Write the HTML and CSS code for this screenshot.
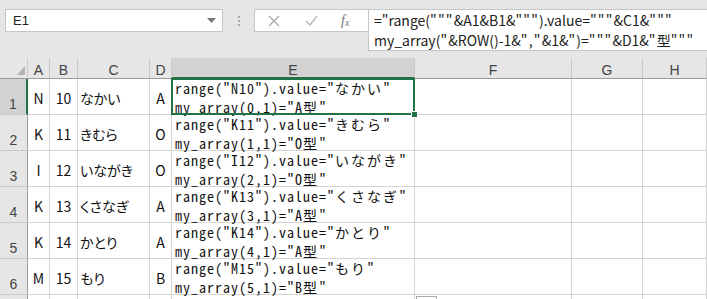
FILE: index.html
```html
<!DOCTYPE html>
<html lang="ja">
<head>
    <meta charset="UTF-8">
    <title>Excel</title>
    <link rel="stylesheet" href="styles.css">
</head>
<body>
    <div class="excel">
        <div class="toolbar">
            <div class="namebox">
                <span>E1</span>
                <svg width="9" height="5" viewBox="0 0 9 5"><path d="M0 0h9L4.5 5z" fill="#7a7a7a"/></svg>
            </div>
            <div class="grip"><i></i><i></i><i></i></div>
            <div class="fx-buttons">
                <svg width="12" height="12" viewBox="0 0 12 12"><path d="M1 1l10 10M11 1L1 11" stroke="#a8a8a8" stroke-width="1.3" fill="none"/></svg>
                <svg width="13" height="11" viewBox="0 0 13 11"><path d="M1 6l4 4L12 1" stroke="#bdbdbd" stroke-width="1.6" fill="none"/></svg>
                <span class="fx">f<sub>x</sub></span>
            </div>
            <div class="formula">
                ="range(<span class="q">"""</span>&amp;A1&amp;B1&amp;<span class="q">"""</span>).value=<span class="q">"""</span>&amp;C1&amp;<span class="q">"""</span><br>
                my_array(<span class="q">"</span>&amp;ROW()-1&amp;<span class="q">","</span>&amp;1&amp;<span class="q">"</span>)=<span class="q">"""</span>&amp;D1&amp;<span class="q">"</span>型<span class="q">"""</span>
            </div>
        </div>

        <div class="sheet">
            <div class="hd corner"><svg width="8" height="9" viewBox="0 0 8 9"><path d="M8 0v9H0z" fill="#b4b4b4"/></svg></div>
            <div class="hd col">A</div>
            <div class="hd col">B</div>
            <div class="hd col">C</div>
            <div class="hd col">D</div>
            <div class="hd col active-col">E</div>
            <div class="hd col">F</div>
            <div class="hd col">G</div>
            <div class="hd col">H</div>

            <div class="hd row active-row">1</div>
            <div class="c mid">N</div><div class="c mid">10</div><div class="c left">なかい</div><div class="c mid">A</div>
            <div class="c code selected">range("N10").value="<span class="jp">なかい</span>"<br>my_array(0,1)="A<span class="jp">型</span>"<span class="handle"></span></div>
            <div class="c"></div><div class="c"></div><div class="c"></div>

            <div class="hd row">2</div>
            <div class="c mid">K</div><div class="c mid">11</div><div class="c left">きむら</div><div class="c mid">O</div>
            <div class="c code">range("K11").value="<span class="jp">きむら</span>"<br>my_array(1,1)="O<span class="jp">型</span>"</div>
            <div class="c"></div><div class="c"></div><div class="c"></div>

            <div class="hd row">3</div>
            <div class="c mid">I</div><div class="c mid">12</div><div class="c left">いながき</div><div class="c mid">O</div>
            <div class="c code">range("I12").value="<span class="jp">いながき</span>"<br>my_array(2,1)="O<span class="jp">型</span>"</div>
            <div class="c"></div><div class="c"></div><div class="c"></div>

            <div class="hd row">4</div>
            <div class="c mid">K</div><div class="c mid">13</div><div class="c left">くさなぎ</div><div class="c mid">A</div>
            <div class="c code">range("K13").value="<span class="jp">くさなぎ</span>"<br>my_array(3,1)="A<span class="jp">型</span>"</div>
            <div class="c"></div><div class="c"></div><div class="c"></div>

            <div class="hd row">5</div>
            <div class="c mid">K</div><div class="c mid">14</div><div class="c left">かとり</div><div class="c mid">A</div>
            <div class="c code">range("K14").value="<span class="jp">かとり</span>"<br>my_array(4,1)="A<span class="jp">型</span>"</div>
            <div class="c"></div><div class="c"></div><div class="c"></div>

            <div class="hd row">6</div>
            <div class="c mid">M</div><div class="c mid">15</div><div class="c left">もり</div><div class="c mid">B</div>
            <div class="c code">range("M15").value="<span class="jp">もり</span>"<br>my_array(5,1)="B<span class="jp">型</span>"</div>
            <div class="c"></div><div class="c"></div><div class="c"></div>

            <div class="hd row"></div>
            <div class="c"></div><div class="c"></div><div class="c"></div><div class="c"></div><div class="c"></div>
            <div class="c"><span class="paste"></span></div>
            <div class="c"></div><div class="c"></div>
        </div>
    </div>
</body>
</html>
```

FILE: styles.css
```css
body {
    margin: 0;
    padding: 0;
    background: #fff;
    font-family: "Noto Sans CJK JP", sans-serif;
    overflow: hidden;
}
.excel {
    width: 707px;
    height: 299px;
    overflow: hidden;
}

/* formula bar */
.toolbar {
    display: flex;
    align-items: flex-start;
    height: 58px;
    padding-top: 9px;
    box-sizing: border-box;
    background: #e6e6e6;
}
.namebox {
    display: flex;
    align-items: center;
    justify-content: space-between;
    margin-left: 5px;
    width: 218px;
    height: 23px;
    box-sizing: border-box;
    padding: 0 6px 0 7px;
    background: #fff;
    border: 1px solid #c6c6c6;
    font-family: "Liberation Sans", sans-serif;
    font-size: 13px;
    color: #222;
}
.grip {
    width: 31px;
    height: 23px;
    display: flex;
    flex-direction: column;
    align-items: center;
    justify-content: center;
    gap: 2px;
}
.grip i {
    width: 2px;
    height: 2px;
    background: #a8a8a8;
}
.fx-buttons {
    display: flex;
    align-items: center;
    width: 114px;
    height: 23px;
    box-sizing: border-box;
    padding-left: 13px;
    background: #fff;
    border: 1px solid #c6c6c6;
    border-right: none;
}
.fx-buttons svg:first-child {
    margin-right: 25px;
}
.fx-buttons svg:nth-child(2) {
    margin-right: 23px;
}
.fx {
    font-family: "Liberation Serif", serif;
    font-style: italic;
    font-size: 14px;
    color: #777;
}
.fx sub {
    font-size: 10px;
    vertical-align: -1px;
}
.formula {
    flex: 1;
    height: 42px;
    box-sizing: border-box;
    padding: 0 0 0 5px;
    background: #fff;
    border: 1px solid #c6c6c6;
    border-right: none;
    font-size: 14px;
    line-height: 20px;
    color: #222;
    white-space: nowrap;
}
.q {
    letter-spacing: 1.2px;
}

/* grid */
.sheet {
    display: grid;
    grid-template-columns: 28px 22px 28px 72px 22px 243px 157px 71px 64px;
    grid-template-rows: 21px repeat(6, 36px) 20px;
}
.hd {
    background: #e6e6e6;
    color: #444;
    font-family: "Liberation Sans", sans-serif;
    box-sizing: border-box;
}
.col {
    display: flex;
    align-items: center;
    justify-content: center;
    font-size: 14px;
    padding-top: 4px;
    border-right: 1px solid #c8c8c8;
    border-bottom: 1px solid #9b9b9b;
}
.corner {
    display: flex;
    align-items: flex-end;
    justify-content: flex-end;
    padding: 0 2px 3px 0;
    border-right: 1px solid #c8c8c8;
    border-bottom: 1px solid #9b9b9b;
}
.active-col {
    background: #d2d2d2;
    border-bottom: 2px solid #217346;
}
.row {
    display: flex;
    align-items: flex-end;
    justify-content: center;
    font-size: 14px;
    padding-bottom: 2px;
    border-right: 1px solid #9b9b9b;
    border-bottom: 1px solid #c8c8c8;
}
.active-row {
    background: #d2d2d2;
    border-right: 2px solid #217346;
}
.c {
    position: relative;
    box-sizing: border-box;
    border-right: 1px solid #d4d4d4;
    border-bottom: 1px solid #d4d4d4;
    font-size: 14px;
    font-feature-settings: "palt";
    color: #111;
}
.mid {
    display: flex;
    align-items: center;
    justify-content: center;
    padding-top: 2px;
}
.left {
    display: flex;
    align-items: center;
    padding: 2px 0 0 2px;
}
.code {
    font-size: 14px;
    font-feature-settings: "hwid";
    line-height: 19px;
    padding: 0 0 0 3px;
    white-space: nowrap;
    letter-spacing: 1px;
}
.code .jp {
    font-feature-settings: normal;
    letter-spacing: 2px;
}
.selected::after {
    content: "";
    position: absolute;
    left: -1px;
    top: -1px;
    right: -1px;
    bottom: -1px;
    border: 2px solid #217346;
}
.handle {
    position: absolute;
    right: -4px;
    bottom: -4px;
    width: 5px;
    height: 5px;
    background: #217346;
    border: 1px solid #fff;
    z-index: 1;
}
.paste {
    display: block;
    margin: 1px 0 0 1px;
    width: 19px;
    height: 12px;
    border: 1px solid #ababab;
    background: #fff;
}
```
